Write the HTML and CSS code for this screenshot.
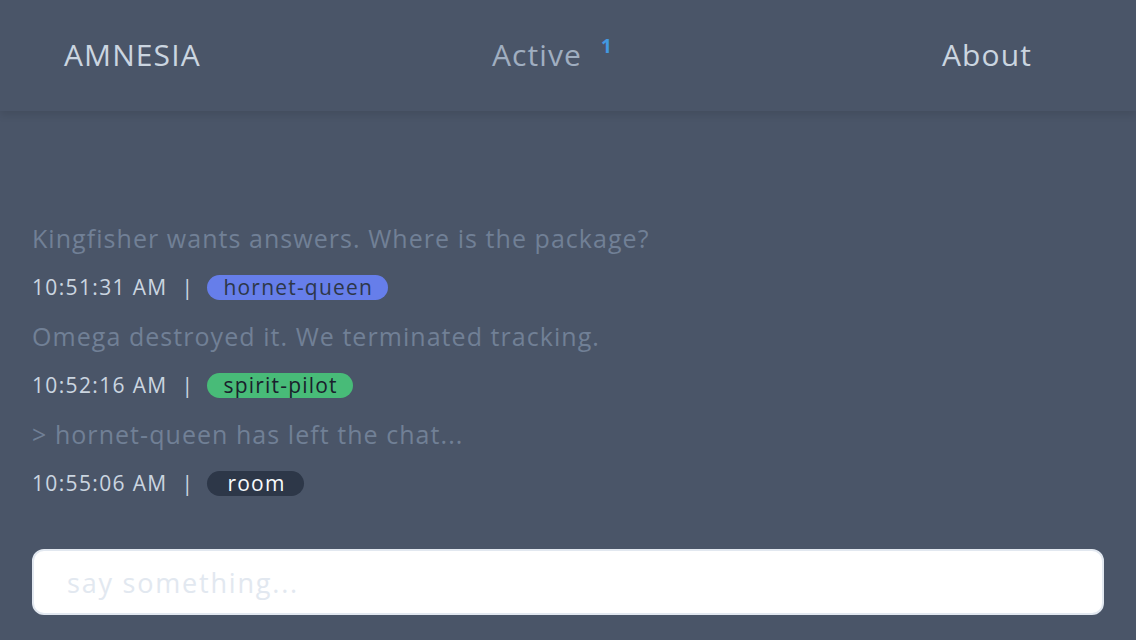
FILE: index.html
```html
<!DOCTYPE html>
<html>
<head>
<meta charset="utf-8">
<link rel="stylesheet" href="styles.css">
</head>
<body>
<header class="topbar">
  <div class="brand">AMNESIA</div>
  <div class="active">Active <sup class="count">1</sup></div>
  <div class="about">About</div>
</header>
<main class="chat">
  <div class="messages">
    <div class="msg">
      <p class="text">Kingfisher wants answers. Where is the package?</p>
      <div class="meta"><span class="time">10:51:31 AM</span><span class="sep">|</span><span class="tag tag-indigo">hornet-queen</span></div>
    </div>
    <div class="msg">
      <p class="text">Omega destroyed it. We terminated tracking.</p>
      <div class="meta"><span class="time">10:52:16 AM</span><span class="sep">|</span><span class="tag tag-green">spirit-pilot</span></div>
    </div>
    <div class="msg">
      <p class="text">&gt; hornet-queen has left the chat...</p>
      <div class="meta"><span class="time">10:55:06 AM</span><span class="sep">|</span><span class="tag tag-dark">room</span></div>
    </div>
  </div>
  <input class="say" type="text" placeholder="say something...">
</main>
</body>
</html>
```

FILE: styles.css
```css
html, body {
  margin: 0;
  padding: 0;
  height: 100%;
}
body {
  background: #4a5568;
  font-family: "Open Sans", "Noto Sans", sans-serif;
  overflow: hidden;
}
.topbar {
  height: 111px;
  box-sizing: border-box;
  display: grid;
  grid-template-columns: 428px auto 1fr;
  align-items: center;
  padding: 0 104px 3px 64px;
  box-shadow: 0 4px 8px rgba(0,0,0,0.1);
  position: relative;
  font-size: 30px;
  letter-spacing: 1.1px;
}
.brand { color: #cbd5e0; }
.active { color: #a0aec0; }
.count {
  color: #4299e1;
  font-size: 19px;
  font-weight: 700;
  margin-left: 10px;
  vertical-align: 13px;
  letter-spacing: 0;
}
.about { color: #cbd5e0; justify-self: end; }
.chat {
  padding: 0 32px;
}
.messages {
  padding-top: 103px;
}
.text {
  margin: 0;
  color: #718096;
  font-size: 25px;
  letter-spacing: 1.05px;
  line-height: 48px;
}
.meta {
  display: flex;
  align-items: center;
  height: 50px;
  font-size: 21px;
  letter-spacing: 1.35px;
  color: #cbd5e0;
}
.sep { margin: 0 13px 0 14px; }
.tag {
  border-radius: 13px;
  padding: 0 15px 0 16px;
  line-height: 25px;
  letter-spacing: 1.2px;
}
.tag-indigo { background: #667eea; color: #2d3748; }
.tag-green { background: #48bb78; color: #1a202c; }
.tag-dark { background: #2d3748; color: #f7fafc; padding: 0 18px 0 20px; }
.say {
  display: block;
  box-sizing: border-box;
  width: 100%;
  height: 66px;
  margin-top: 41px;
  border: 2px solid #e2e8f0;
  border-radius: 12px;
  background: #fff;
  font-family: inherit;
  font-size: 27px;
  letter-spacing: 1.8px;
  padding: 0 33px;
  outline: none;
}
.say::placeholder { color: #e2e8f0; }
```
